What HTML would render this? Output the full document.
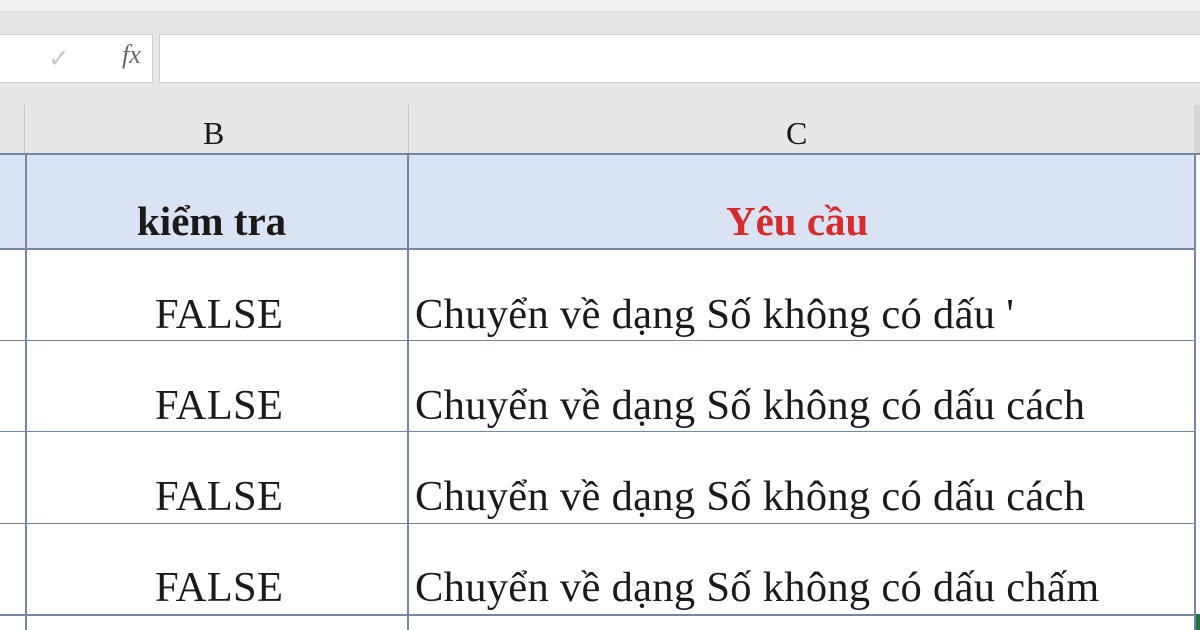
<!DOCTYPE html>
<html><head><meta charset="utf-8"><style>
body{margin:0;width:1200px;height:630px;overflow:hidden;background:#fff;position:relative;font-family:"Liberation Serif",serif}
.a{position:absolute}
.t{position:absolute;line-height:1;white-space:nowrap;color:#1a1a1a}
.b{font-size:42.5px;letter-spacing:0.3px}
.h{background:#7585a6}
</style></head><body>
<div class="a" style="left:0;top:0;width:1200px;height:11px;background:#f1f1f1;border-bottom:1px solid #dcdcdc"></div>
<div class="a" style="left:0;top:12px;width:1200px;height:94px;background:#e6e6e6"></div>
<div class="a" style="left:0;top:34px;width:152px;height:47px;background:#fff;border:1px solid #d0d0d0;border-left:none"></div>
<div class="a" style="left:159px;top:34px;width:1045px;height:47px;background:#fff;border:1px solid #d0d0d0"></div>
<div class="t" style="left:48px;top:46px;font-size:26px;color:#c8c8c8;font-family:'DejaVu Sans'">✓</div>
<div class="t" style="left:122px;top:42px;font-size:26px;color:#666;font-style:italic">fx</div>
<div class="a" style="left:0;top:105px;width:1200px;height:49px;background:#e7e7e7"></div>
<div class="a" style="left:24px;top:105px;width:1px;height:49px;background:#c4c4c4"></div>
<div class="a" style="left:408px;top:105px;width:1px;height:49px;background:#c4c4c4"></div>
<div class="a" style="left:1194px;top:105px;width:6px;height:49px;background:#d5d5d5"></div>
<div class="t" style="left:203px;top:117px;font-size:32px">B</div>
<div class="t" style="left:786px;top:117px;font-size:32px">C</div>
<div class="a" style="left:0;top:154px;width:1195px;height:95px;background:#dae3f3"></div>
<div class="a h" style="left:0;top:153px;width:1200px;height:2px"></div>
<div class="t" style="left:137px;top:201px;font-size:41px;font-weight:bold">kiểm tra</div>
<div class="t" style="left:726px;top:201px;font-size:41px;font-weight:bold;color:#d42b2b">Yêu cầu</div>
<div class="a h" style="left:0;top:248px;width:1195px;height:2px"></div>
<div class="a h" style="left:0;top:340px;width:1195px;height:1px"></div>
<div class="a h" style="left:0;top:431px;width:1195px;height:1px"></div>
<div class="a h" style="left:0;top:523px;width:1195px;height:1px"></div>
<div class="a h" style="left:0;top:614px;width:1195px;height:2px"></div>
<div class="a h" style="left:25px;top:154px;width:2px;height:476px"></div>
<div class="a h" style="left:407px;top:154px;width:2px;height:476px"></div>
<div class="a h" style="left:1194px;top:154px;width:2px;height:476px"></div>
<div class="a" style="left:1196px;top:614px;width:4px;height:16px;background:#217346"></div>
<div class="t b" style="left:155px;top:294px">FALSE</div>
<div class="t b" style="left:155px;top:385px">FALSE</div>
<div class="t b" style="left:155px;top:476px">FALSE</div>
<div class="t b" style="left:155px;top:567px">FALSE</div>
<div class="t b" style="left:415px;top:294px">Chuyển về dạng Số không có dấu '</div>
<div class="t b" style="left:415px;top:385px">Chuyển về dạng Số không có dấu cách</div>
<div class="t b" style="left:415px;top:476px">Chuyển về dạng Số không có dấu cách</div>
<div class="t b" style="left:415px;top:567px">Chuyển về dạng Số không có dấu chấm</div>
</body></html>
